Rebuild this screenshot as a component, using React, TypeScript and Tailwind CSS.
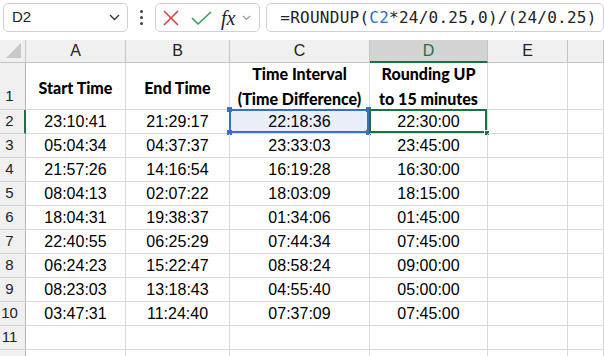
import React from "react";

const rows: string[][] = [
  ["23:10:41", "21:29:17", "22:18:36", "22:30:00"],
  ["05:04:34", "04:37:37", "23:33:03", "23:45:00"],
  ["21:57:26", "14:16:54", "16:19:28", "16:30:00"],
  ["08:04:13", "02:07:22", "18:03:09", "18:15:00"],
  ["18:04:31", "19:38:37", "01:34:06", "01:45:00"],
  ["22:40:55", "06:25:29", "07:44:34", "07:45:00"],
  ["06:24:23", "15:22:47", "08:58:24", "09:00:00"],
  ["08:23:03", "13:18:43", "04:55:40", "05:00:00"],
  ["03:47:31", "11:24:40", "07:37:09", "07:45:00"],
];

const cols = ["A", "B", "C", "D", "E", ""];
const sans = "font-['Liberation_Sans',Arial,sans-serif]";
const bold = "font-['Lato','Liberation_Sans',sans-serif] font-black";

function RowHead({ n, tall, active }: { n: number | string; tall?: boolean; active?: boolean }) {
  return (
    <div
      className={`flex ${tall ? "items-end pb-[2px]" : "items-center"} bg-[#f0f0f0] border-b border-[#d4d4d4] ${
        active ? "border-r-2 border-r-[#1e7145]" : "border-r border-r-[#b8b8b8]"
      } ${sans} text-[15px] text-[#222]`}
    >
      <span className="w-[19px] text-center">{n}</span>
    </div>
  );
}

function Cell({ children, className = "" }: { children?: React.ReactNode; className?: string }) {
  return (
    <div
      className={`relative flex items-center justify-center border-r border-b border-[#dadada] text-black ${className}`}
    >
      {children}
    </div>
  );
}

function Handle({ className }: { className: string }) {
  return <div className={`absolute w-[5px] h-[5px] ${className}`} />;
}

function Toolbar() {
  return (
    <div className="flex items-center h-[40px] pt-[3px] pb-[8px] pl-[3px] bg-white">
      <div className="flex items-center justify-between w-[126px] h-[29px] border border-[#d0d0d0] rounded-[5px] pl-[8px] pr-[7px]">
        <span className={`${sans} text-[15px] text-[#222]`}>D2</span>
        <svg width="11" height="7" viewBox="0 0 11 7">
          <path d="M1 1l4.5 4.5L10 1" stroke="#333" strokeWidth="1.3" fill="none" />
        </svg>
      </div>
      <div className="flex flex-col gap-[3px] items-center w-[27px]">
        <span className="w-[3px] h-[3px] rounded-full bg-[#444]" />
        <span className="w-[3px] h-[3px] rounded-full bg-[#444]" />
        <span className="w-[3px] h-[3px] rounded-full bg-[#444]" />
      </div>
      <div className="flex items-center w-[106px] h-[29px] border border-[#d0d0d0] rounded-[5px] pl-[6px]">
        <svg width="18" height="16" viewBox="0 0 18 16">
          <path d="M2 1l14 14M16 1L2 15" stroke="#e0403f" strokeWidth="1.6" fill="none" />
        </svg>
        <svg width="21" height="16" viewBox="0 0 21 16" className="ml-[11px]">
          <path d="M1 8l6 6L20 2" stroke="#3c9a55" strokeWidth="1.6" fill="none" />
        </svg>
        <span className="ml-[9px] font-['Liberation_Serif',serif] italic text-[20px] leading-none text-[#222]">
          fx
        </span>
        <svg width="9" height="6" viewBox="0 0 9 6" className="ml-[7px]">
          <path d="M1 1l3.5 3.5L8 1" stroke="#999" strokeWidth="1.2" fill="none" />
        </svg>
      </div>
      <div className="flex items-center ml-[6px] w-[340px] h-[29px] border border-[#d0d0d0] rounded-[5px] pl-[13px] overflow-hidden">
        <span className="font-['DejaVu_Sans_Mono',monospace] text-[16px] tracking-[0.25px] whitespace-nowrap text-[#222]">
          =ROUNDUP(<span className="text-[#2f6cc4]">C2</span>*24/0.25,0)/(24/0.25)
        </span>
      </div>
    </div>
  );
}

export default function App() {
  return (
    <div className="w-[604px] h-[356px] overflow-hidden bg-white">
      <Toolbar />
      <div className="grid grid-cols-[26px_100px_104px_140px_118px_80px_36px] grid-rows-[23px_47px_repeat(11,24px)]">
        <div className="relative bg-[#f0f0f0] border-r border-b border-[#c4c4c4]">
          <svg width="16" height="16" viewBox="0 0 16 16" className="absolute right-[3px] bottom-[3px]">
            <path d="M15 0V15H0Z" fill="#c8c8c8" />
          </svg>
        </div>
        {cols.map((c, i) =>
          c === "D" ? (
            <div
              key={i}
              className={`flex items-center justify-center bg-[#d3d3d3] border-r border-[#c4c4c4] border-b-2 border-b-[#1e7145] ${sans} text-[16px] text-[#1e7145]`}
            >
              {c}
            </div>
          ) : (
            <div
              key={i}
              className={`flex items-center justify-center bg-[#f0f0f0] border-r border-b border-[#c4c4c4] ${sans} text-[16px] text-[#222]`}
            >
              {c}
            </div>
          )
        )}

        <RowHead n={1} tall />
        <Cell className={`${bold} text-[16px] pt-[4px]`}>Start Time</Cell>
        <Cell className={`${bold} text-[16px] pt-[4px]`}>End Time</Cell>
        <Cell className={`${bold} text-[16px] leading-[25px] text-center`}>
          Time Interval
          <br />
          (Time Difference)
        </Cell>
        <Cell className={`${bold} text-[16px] leading-[25px] text-center`}>
          Rounding UP
          <br />
          to 15 minutes
        </Cell>
        <Cell />
        <Cell />

        {rows.map((r, ri) => (
          <React.Fragment key={ri}>
            <RowHead n={ri + 2} active={ri === 0} />
            {r.map((v, ci) => (
              <Cell
                key={ci}
                className={`${sans} text-[16px] ${ri === 0 && ci === 2 ? "bg-[#e9eef8]" : ""}`}
              >
                {v}
                {ri === 0 && ci === 2 && (
                  <>
                    <div className="absolute -left-[1px] -top-[1px] right-0 bottom-0 border-2 border-[#3b6fc6]" />
                    <Handle className="-left-[3px] -top-[3px] bg-[#3b6fc6]" />
                    <Handle className="-right-[2px] -top-[3px] bg-[#3b6fc6]" />
                    <Handle className="-left-[3px] -bottom-[2px] bg-[#3b6fc6]" />
                    <Handle className="-right-[2px] -bottom-[2px] bg-[#3b6fc6]" />
                  </>
                )}
                {ri === 0 && ci === 3 && (
                  <>
                    <div className="absolute -left-[1px] -top-[1px] right-0 bottom-0 border-2 border-[#1e7145]" />
                    <Handle className="-right-[3px] -bottom-[3px] w-[6px] h-[6px] bg-[#1e7145] border border-white" />
                  </>
                )}
              </Cell>
            ))}
            <Cell />
            <Cell />
          </React.Fragment>
        ))}

        {[11, 12].map((n) => (
          <React.Fragment key={n}>
            <RowHead n={n === 11 ? 11 : ""} />
            <Cell />
            <Cell />
            <Cell />
            <Cell />
            <Cell />
            <Cell />
          </React.Fragment>
        ))}
      </div>
    </div>
  );
}
